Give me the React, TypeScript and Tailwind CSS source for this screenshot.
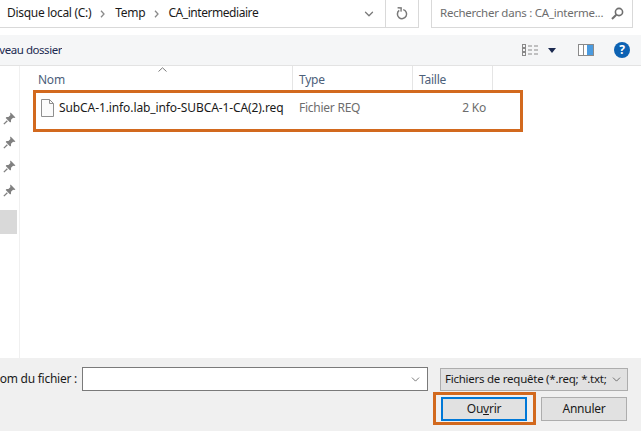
import React from 'react';
import { ChevronDown } from 'lucide-react';

const Pin = () => (
  <svg width="13" height="13" viewBox="0 0 12 12" className="text-[#808080]">
    <path d="M7 0.5 L11.5 5 L10.3 5.6 L9.3 5.2 L7.4 7.1 L7.4 9 L6.6 9.8 L2.5 5.5 L3.2 4.7 L5 4.7 L6.9 2.8 L6.5 1.6 Z" fill="currentColor" />
    <path d="M4 8 L0.8 11.2" stroke="currentColor" strokeWidth="1.2" />
  </svg>
);

const ViewIcon = () => (
  <svg width="17" height="13" viewBox="0 0 17 13" fill="none">
    <rect x="0.5" y="0.5" width="3" height="3" stroke="#8a8a8a" />
    <rect x="0.5" y="4.5" width="3" height="3" stroke="#8a8a8a" />
    <rect x="0.5" y="8.5" width="3" height="3" stroke="#8a8a8a" />
    <path d="M6 2h4M12 2h4M6 6h4M12 6h4M6 10h4M12 10h4" stroke="#8a8a8a" />
  </svg>
);

const PaneIcon = () => (
  <svg width="16" height="12" viewBox="0 0 16 12">
    <rect x="0.5" y="0.5" width="15" height="11" fill="#fff" stroke="#8a8a8a" />
    <rect x="5" y="1" width="1" height="10" fill="#8a8a8a" />
    <rect x="9" y="1" width="6" height="10" fill="#4a9be0" />
  </svg>
);

const FileIcon = () => (
  <svg width="13" height="18" viewBox="0 0 13 18" fill="none">
    <path d="M0.5 0.5 H8.5 L12.5 4.5 V17.5 H0.5 Z" fill="#fbfbfb" stroke="#8f8f8f" />
    <path d="M8.5 0.5 V4.5 H12.5" stroke="#8f8f8f" />
  </svg>
);

const SearchIcon = () => (
  <svg width="13" height="13" viewBox="0 0 13 13" fill="none">
    <circle cx="8" cy="5" r="3.6" stroke="#6f6f6f" strokeWidth="1.6" />
    <path d="M5.3 7.7 L1 12" stroke="#6f6f6f" strokeWidth="2" />
  </svg>
);

const RefreshIcon = () => (
  <svg width="12" height="13" viewBox="0 0 12 13" fill="none">
    <path d="M7.2 2.6 A4.6 4.6 0 1 1 3.2 3.4" stroke="#7a7a7a" strokeWidth="1.5" />
    <path d="M1.6 0.8 L5.2 1 L5 4.6" stroke="#7a7a7a" strokeWidth="1.4" />
  </svg>
);

const Crumb = () => (
  <svg width="5" height="8" viewBox="0 0 5 8" fill="none">
    <path d="M1 0.8 L4 4 L1 7.2" stroke="#8a8a8a" strokeWidth="1.3" />
  </svg>
);

export default function App() {
  return (
    <div className="relative w-[641px] h-[431px] overflow-hidden bg-white flex flex-col text-[12px] tracking-[-0.25px] font-['Noto_Sans',sans-serif] text-[#1a1a1a]">
      {/* adresse + recherche */}
      <div className="h-[28px] flex shrink-0">
        <div className="w-[419px] flex items-center border-r border-b border-[#d9d9d9] pl-[7px]">
          <span className="pb-[2px] tracking-[-0.3px]">Disque local (C:)</span>
          <span className="ml-[9px] mr-[10px]"><Crumb /></span>
          <span className="pb-[2px]">Temp</span>
          <span className="ml-[9px] mr-[9px]"><Crumb /></span>
          <span className="pb-[2px] tracking-[-0.45px]">CA_intermediaire</span>
          <div className="ml-auto flex items-center h-full">
            <ChevronDown size={14} strokeWidth={2.2} className="text-[#7a7a7a] mr-[9px]" />
            <div className="h-full w-[33px] border-l border-[#d9d9d9] flex items-center justify-center">
              <RefreshIcon />
            </div>
          </div>
        </div>
        <div className="ml-[12px] w-[202px] flex items-center border-l border-r border-b border-[#d9d9d9] pl-[8px] pr-[8px] text-[#6d6d6d]">
          <span className="pb-[2px] whitespace-nowrap text-[11.5px]">Rechercher dans : CA_interme...</span>
          <span className="ml-auto"><SearchIcon /></span>
        </div>
      </div>

      {/* barre d'outils */}
      <div className="mt-[7px] h-[31px] shrink-0 bg-[#f5f6f7] border-b border-[#e3e3e3] flex items-center">
        <div className="w-[62px] overflow-hidden flex justify-end">
          <span className="whitespace-nowrap text-[#1b2a50] text-[11.5px] tracking-[-0.45px]">Nouveau dossier</span>
        </div>
        <div className="ml-auto flex items-center">
          <ViewIcon />
          <svg width="8" height="5" viewBox="0 0 8 5" className="ml-[9px]"><path d="M0 0h8L4 5z" fill="#1b2a50" /></svg>
          <span className="ml-[22px]"><PaneIcon /></span>
          <div className="ml-[20px] mr-[11px] w-[16px] h-[16px] rounded-full bg-[#0d62b3] text-white flex items-center justify-center font-bold text-[12px] leading-none">?</div>
        </div>
      </div>

      {/* contenu */}
      <div className="flex-1 flex min-h-0">
        <div className="w-[20px] shrink-0 border-r border-[#f0f0f0] pt-[40px] flex flex-col">
          {[0, 1, 2, 3].map(i => (
            <div key={i} className="h-[24px] flex items-center pl-[3px]"><Pin /></div>
          ))}
          <div className="mt-[8px] h-[24px] w-[17px] bg-[#d9d9d9]" />
        </div>
        <div className="flex-1 min-w-0">
          <div className="relative h-[24px] flex text-[#4c607a]">
            <div className="w-[273px] border-r border-[#e5e5e5] pl-[18px] flex items-center pt-[3px]">Nom</div>
            <div className="w-[120px] border-r border-[#e5e5e5] pl-[6px] flex items-center pt-[3px]">Type</div>
            <div className="w-[80px] border-r border-[#e5e5e5] pl-[6px] flex items-center pt-[3px]">Taille</div>
            <svg width="9" height="5" viewBox="0 0 9 5" fill="none" className="absolute left-[138px] top-[1px]">
              <path d="M0.5 4.5 L4.5 0.8 L8.5 4.5" stroke="#7a7a7a" />
            </svg>
          </div>
          <div className="h-[24px] mt-[6px] flex items-center">
            <div className="w-[273px] pl-[21px] flex items-center">
              <FileIcon />
              <span className="ml-[5px] whitespace-nowrap tracking-[-0.1px]">SubCA-1.info.lab_info-SUBCA-1-CA(2).req</span>
            </div>
            <div className="w-[120px] pl-[6px] text-[#6d6d6d]">Fichier REQ</div>
            <div className="w-[73px] text-right text-[#6d6d6d]">2 Ko</div>
          </div>
        </div>
      </div>

      {/* bas */}
      <div className="h-[73px] shrink-0 bg-[#f0f0f0] pt-[9px] flex flex-col">
        <div className="flex items-center h-[24px]">
          <div className="w-[77px] overflow-hidden flex justify-end">
            <span className="whitespace-nowrap pb-[1px]">Nom du fichier :</span>
          </div>
          <div className="ml-[5px] w-[346px] h-[24px] bg-white border border-[#7a7a7a] flex items-center justify-end pr-[5px]">
            <ChevronDown size={13} strokeWidth={1.2} className="text-[#333]" />
          </div>
          <div className="ml-[12px] w-[188px] h-[23px] bg-[#e1e1e1] border border-[#adadad] flex items-center pl-[4px] pr-[4px]">
            <span className="whitespace-nowrap pb-[1px] text-[11.5px]">Fichiers de requête (*.req; *.txt;</span>
            <ChevronDown size={13} strokeWidth={1.2} className="ml-auto shrink-0 text-[#333]" />
          </div>
        </div>
        <div className="flex mt-[6px] pl-[441px] gap-[14px]">
          <div className="w-[86px] h-[24px] bg-[#e1e1e1] border-2 border-[#0078d7] flex items-center justify-center pb-[1px]">
            <span>Ou<span className="underline">v</span>rir</span>
          </div>
          <div className="w-[86px] h-[24px] bg-[#e1e1e1] border border-[#adadad] flex items-center justify-center pb-[1px]">Annuler</div>
        </div>
      </div>

      {/* annotations */}
      <div className="absolute left-[33px] top-[90px] w-[490px] h-[42px] border-[3px] border-[#d2691e]" />
      <div className="absolute left-[433px] top-[392px] w-[103px] h-[33px] border-[3px] border-[#d2691e]" />
    </div>
  );
}
